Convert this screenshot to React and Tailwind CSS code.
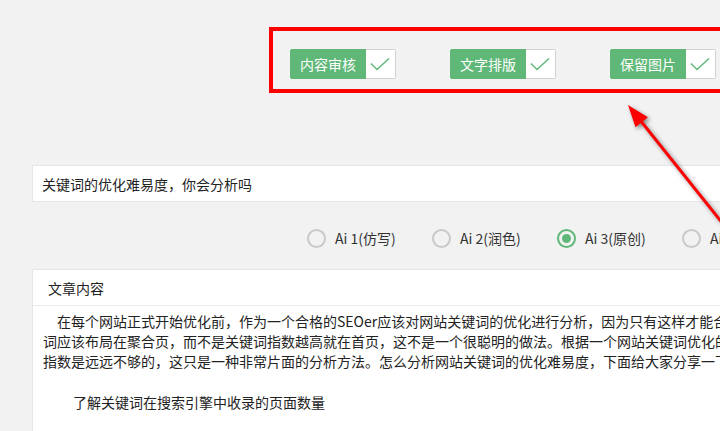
import { useState } from 'react';

const tags = ['内容审核', '文字排版', '保留图片'];
const modes = ['Ai 1(仿写)', 'Ai 2(润色)', 'Ai 3(原创)', 'Ai 4(伪原创)'];

function CheckTag({ label }) {
  return (
    <div className="flex h-[30px] w-[106px] shrink-0">
      <span className="flex w-[76px] items-center justify-center rounded-l-[2px] bg-[#5fb878] text-[14px] leading-none text-white">
        {label}
      </span>
      <span className="flex w-[30px] items-center justify-center rounded-r-[2px] border border-l-0 border-[#d2d2d2] bg-white">
        <svg width="30" height="30" viewBox="0 0 30 30" className="-mr-px">
          <polyline points="5,14.5 11,20.5 23,9.5" fill="none" stroke="#5fb878" strokeWidth="1.4" />
        </svg>
      </span>
    </div>
  );
}

function Radio({ label, checked, onPick }) {
  return (
    <button onClick={onPick} className="flex w-[125px] shrink-0 items-center gap-[9px] text-left">
      <span
        className={`flex h-[19px] w-[19px] shrink-0 items-center justify-center rounded-full border-2 ${
          checked ? 'border-[#5fb878]' : 'border-[#c9c9c9]'
        }`}
      >
        {checked && <span className="h-[9px] w-[9px] rounded-full bg-[#5fb878]" />}
      </span>
      <span className="whitespace-nowrap text-[14px] leading-[20px] text-[#333]">{label}</span>
    </button>
  );
}

export default function App() {
  const [mode, setMode] = useState(2);

  return (
    <div
      className="relative h-[431px] w-[720px] overflow-hidden bg-[#f2f2f2]"
      style={{ fontFamily: '"Noto Sans CJK SC", "Noto Sans", sans-serif' }}
    >
      <div className="flex gap-[54px] pl-[290px] pt-[49px]">
        {tags.map((t) => (
          <CheckTag key={t} label={t} />
        ))}
      </div>

      <div className="ml-[32px] mt-[86px] flex h-[37px] w-[760px] items-center border border-[#e6e6e6] bg-white pl-[9px]">
        <span className="text-[14px] leading-[20px] text-[#222]">关键词的优化难易度，你会分析吗</span>
      </div>

      <div className="mt-[26px] flex h-[20px] w-[900px] pl-[307px]">
        {modes.map((m, i) => (
          <Radio key={m} label={m} checked={mode === i} onPick={() => setMode(i)} />
        ))}
      </div>

      <div className="ml-[32px] mt-[21px] min-h-[220px] w-[900px] rounded-[2px] border border-[#e6e6e6] bg-white">
        <div className="flex h-[36px] items-center border-b border-[#ebebeb] pl-[15px]">
          <span className="text-[14px] leading-[20px] text-[#222]">文章内容</span>
        </div>
        <div className="whitespace-nowrap px-[10px] pt-[5px] text-[14px] leading-[20px] text-[#222]">
          <p className="pl-[14px]">在每个网站正式开始优化前，作为一个合格的SEOer应该对网站关键词的优化进行分析，因为只有这样才能合理地安排关键</p>
          <p>词应该布局在聚合页，而不是关键词指数越高就在首页，这不是一个很聪明的做法。根据一个网站关键词优化的难易程度，仅看</p>
          <p>指数是远远不够的，这只是一种非常片面的分析方法。怎么分析网站关键词的优化难易度，下面给大家分享一下具体方法。</p>
          <p className="mt-[21px] pl-[30px]">了解关键词在搜索引擎中收录的页面数量</p>
        </div>
      </div>

      <div className="pointer-events-none absolute left-[269px] top-[27px] h-[66px] w-[470px] border-4 border-[#ff0000]" />

      <svg
        className="pointer-events-none absolute left-0 top-0 drop-shadow-[2px_2px_2px_rgba(0,0,0,0.45)]"
        width="720"
        height="431"
        viewBox="0 0 720 431"
      >
        <line x1="640" y1="120" x2="735" y2="239" stroke="#ff0000" strokeWidth="3" />
        <polygon points="628,105 635.5,127.2 647.9,117.2" fill="#ff0000" />
      </svg>
    </div>
  );
}
